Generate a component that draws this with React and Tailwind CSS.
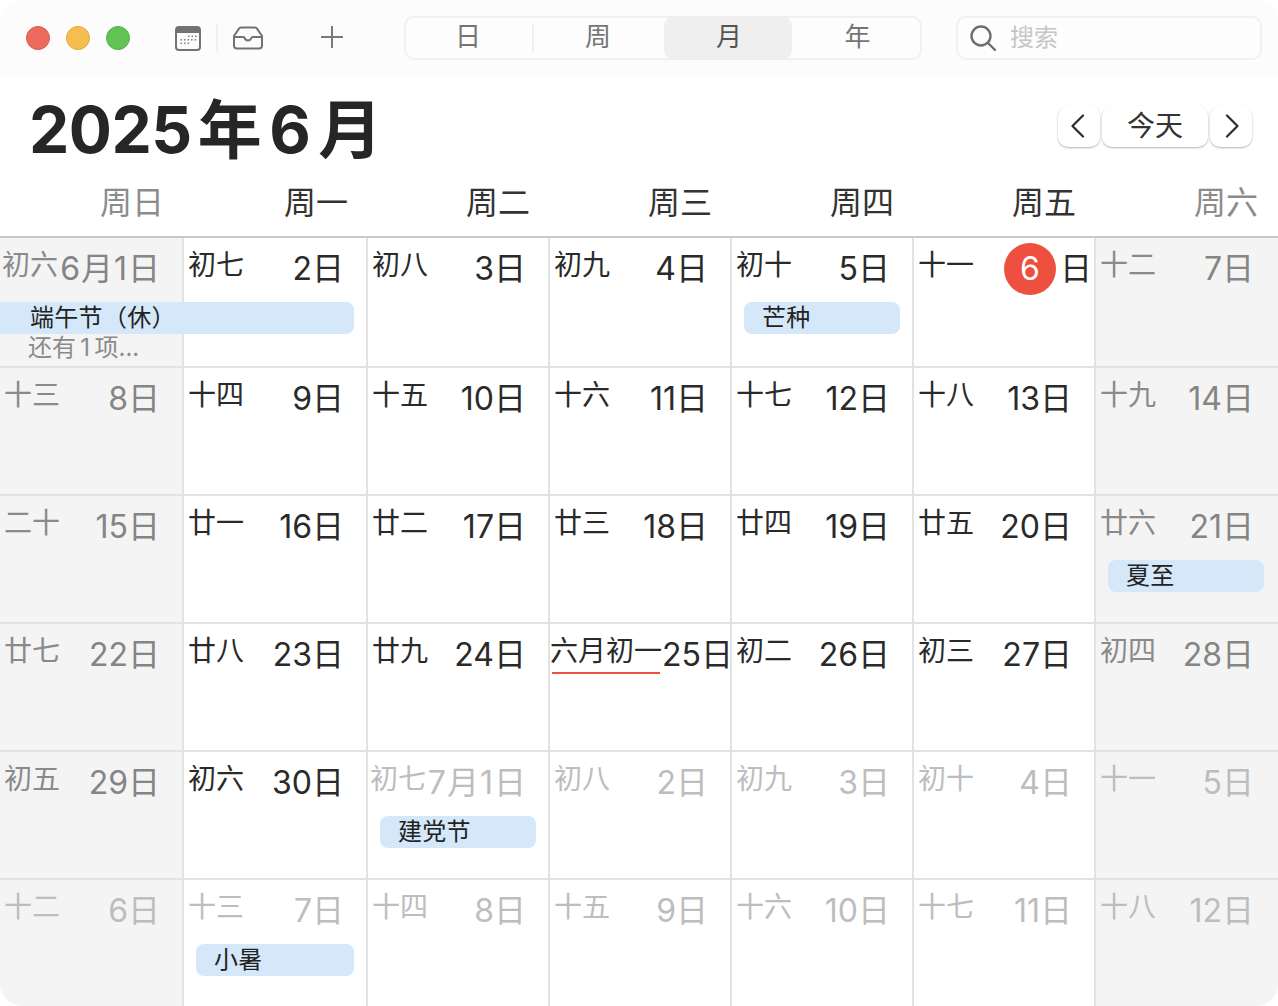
const FONT = "font-['Inter','Noto_Sans_CJK_SC',sans-serif]"

const COL_WIDTHS = "grid grid-cols-[184px_184px_182px_182px_182px_182px_182px]"

const weekDays = ["周日", "周一", "周二", "周三", "周四", "周五", "周六"]

// lunar, day label, muted (other month), optional event
const weeks = [
	[
		{ l: "初六", d: "6月1日", tight: true, span: "端午节（休）", more: "还有\u20091\u2009项..." },
		{ l: "初七", d: "2日" },
		{ l: "初八", d: "3日" },
		{ l: "初九", d: "4日" },
		{ l: "初十", d: "5日", ev: "芒种" },
		{ l: "十一", today: true },
		{ l: "十二", d: "7日" },
	],
	[
		{ l: "十三", d: "8日" },
		{ l: "十四", d: "9日" },
		{ l: "十五", d: "10日" },
		{ l: "十六", d: "11日" },
		{ l: "十七", d: "12日" },
		{ l: "十八", d: "13日" },
		{ l: "十九", d: "14日" },
	],
	[
		{ l: "二十", d: "15日" },
		{ l: "廿一", d: "16日" },
		{ l: "廿二", d: "17日" },
		{ l: "廿三", d: "18日" },
		{ l: "廿四", d: "19日" },
		{ l: "廿五", d: "20日" },
		{ l: "廿六", d: "21日", ev: "夏至" },
	],
	[
		{ l: "廿七", d: "22日" },
		{ l: "廿八", d: "23日" },
		{ l: "廿九", d: "24日" },
		{ l: "六月初一", d: "25日", newMonth: true },
		{ l: "初二", d: "26日" },
		{ l: "初三", d: "27日" },
		{ l: "初四", d: "28日" },
	],
	[
		{ l: "初五", d: "29日" },
		{ l: "初六", d: "30日" },
		{ l: "初七", d: "7月1日", tight: true, muted: true, ev: "建党节" },
		{ l: "初八", d: "2日", muted: true },
		{ l: "初九", d: "3日", muted: true },
		{ l: "初十", d: "4日", muted: true },
		{ l: "十一", d: "5日", muted: true },
	],
	[
		{ l: "十二", d: "6日", muted: true },
		{ l: "十三", d: "7日", muted: true, ev: "小暑" },
		{ l: "十四", d: "8日", muted: true },
		{ l: "十五", d: "9日", muted: true },
		{ l: "十六", d: "10日", muted: true },
		{ l: "十七", d: "11日", muted: true },
		{ l: "十八", d: "12日", muted: true },
	],
]

const CalendarIcon = () => (
	<svg width="26" height="25" viewBox="0 0 26 25">
		<rect x="1" y="1" width="24" height="23" rx="3" fill="none" stroke="#727272" strokeWidth="2" />
		<path d="M1 7V4a3 3 0 0 1 3-3h18a3 3 0 0 1 3 3v3z" fill="#727272" />
		<g fill="#8a8a8a">
			{[13, 16.5, 20].map((x) => <rect key={x} x={x} y="9.5" width="1.6" height="1.6" />)}
			{[5.5, 9, 12.5, 16, 19.5].map((x) => <rect key={x} x={x} y="13" width="1.6" height="1.6" />)}
			{[5.5, 9, 12.5].map((x) => <rect key={x} x={x} y="16.5" width="1.6" height="1.6" />)}
		</g>
	</svg>
)

const InboxIcon = () => (
	<svg width="32" height="24" viewBox="0 0 32 24" fill="none" stroke="#727272" strokeWidth="2" strokeLinejoin="round">
		<path d="M9 1.5h14a2.5 2.5 0 0 1 2 1.1l5 7.4v9.5a3 3 0 0 1-3 3H5a3 3 0 0 1-3-3V10l5-7.4a2.5 2.5 0 0 1 2-1.1z" />
		<path d="M2 11h9.5c0.8 0 1 0.6 1.3 1.4 0.5 1.3 1.7 2.1 3.2 2.1s2.7-0.8 3.2-2.1c0.3-0.8 0.5-1.4 1.3-1.4H30" />
	</svg>
)

const SearchIcon = () => (
	<svg width="28" height="28" viewBox="0 0 28 28" fill="none" stroke="#6e6e6e" strokeWidth="2.4" strokeLinecap="round">
		<circle cx="12" cy="12" r="9.5" />
		<path d="M19 19l7 7" />
	</svg>
)

const Chevron = ({ right }) => (
	<svg width="14" height="24" viewBox="0 0 14 24" fill="none" stroke="#2c2c2c" strokeWidth="2.2" strokeLinecap="round" strokeLinejoin="round">
		<path d={right ? "M2 1.5L12.5 12 2 22.5" : "M12 1.5L1.5 12 12 22.5"} />
	</svg>
)

const Toolbar = () => (
	<div className="h-[76px] bg-[#fcfcfc] flex items-center">
		<div className="flex gap-[16px] ml-[26px]">
			<div className="w-[24px] h-[24px] rounded-full bg-[#ee6a5f] border border-[#e0564b]"></div>
			<div className="w-[24px] h-[24px] rounded-full bg-[#f6bd4f] border border-[#e3a83b]"></div>
			<div className="w-[24px] h-[24px] rounded-full bg-[#61c454] border border-[#55b049]"></div>
		</div>
		<div className="ml-[45px] flex items-center">
			<CalendarIcon />
		</div>
		<div className="ml-[15px] w-[2px] h-[28px] bg-[#f0f0f0]"></div>
		<div className="ml-[14px] flex items-center">
			<InboxIcon />
		</div>
		<div className="ml-[57px] w-[22px] h-[22px] relative -mt-[2px]">
			<div className="absolute left-0 right-0 top-[10px] h-[2px] bg-[#7a7a7a]"></div>
			<div className="absolute top-0 bottom-0 left-[10px] w-[2px] bg-[#7a7a7a]"></div>
		</div>
		<div className="ml-[61px] w-[518px] h-[44px] rounded-[10px] border-2 border-[#f1f1f1] bg-[#fdfdfd] flex items-center text-[26px] leading-[38px] text-[#757575] relative">
			<div className="w-[124px] text-center pb-[2px] mr-[2px]">日</div>
			<div className="w-[2px] h-[28px] bg-[#f0f0f0]"></div>
			<div className="w-[130px] text-center pr-[2px] pb-[2px]">周</div>
			<div className="w-[128px] h-[44px] -my-[2px] rounded-[10px] bg-[#efefef] flex items-center justify-center text-[#555] pb-[2px] pl-[2px]">月</div>
			<div className="w-[127px] text-center pl-[4px] pb-[2px]">年</div>
		</div>
		<div className="ml-[34px] w-[306px] h-[44px] rounded-[10px] border-2 border-[#f1f1f1] bg-[#fdfdfd] flex items-center pl-[11px]">
			<SearchIcon />
			<span className="ml-[13px] text-[24px] text-[#c6c6c6]">搜索</span>
		</div>
	</div>
)

const TitleRow = () => (
	<div className="h-[102px] flex items-center justify-between pl-[29px] pr-[26px]">
		<h1 className="flex gap-[8px] items-center text-[64px] font-bold text-[#262626] leading-none tracking-[-0.5px] mt-[6px]">
			<span>2025</span>
			<span className="-ml-[2px]">年</span>
			<span>6</span>
			<span>月</span>
		</h1>
		<div className="flex gap-[2px] -mt-[2px]">
			<button className="w-[42px] h-[41px] rounded-[10px] bg-white shadow-[0_1px_2px_rgba(0,0,0,0.3)] flex items-center justify-center pr-[2px]">
				<Chevron />
			</button>
			<button className="w-[106px] h-[41px] rounded-[10px] bg-white shadow-[0_1px_2px_rgba(0,0,0,0.3)] text-[28px] leading-[38px] text-[#333]">今天</button>
			<button className="w-[42px] h-[41px] rounded-[10px] bg-white shadow-[0_1px_2px_rgba(0,0,0,0.3)] flex items-center justify-center pl-[2px]">
				<Chevron right />
			</button>
		</div>
	</div>
)

const WeekHeader = () => (
	<div className={`${COL_WIDTHS} h-[60px] border-b-2 border-[#c9c7cc]`}>
		{weekDays.map((w, i) => {
			const weekend = i === 0 || i === 6
			return (
				<div key={w} className={`text-right pr-[20px] text-[32px] leading-[50px] ${weekend ? "text-[#8c8c8c]" : "text-[#333]"}`}>
					{w}
				</div>
			)
		})}
	</div>
)

const Cell = ({ c, col, last }) => {
	const weekend = col === 0 || col === 6
	let lunarColor = "text-[#2a2a2a]"
	let dayColor = "text-[#2a2a2a]"
	if (weekend) {
		lunarColor = "text-[#8a8a8a]"
		dayColor = "text-[#858585]"
	}
	if (c.muted) {
		lunarColor = "text-[#bdbdbd]"
		dayColor = "text-[#bdbdbd]"
	}
	let padding = col === 6 ? "pl-[4px] pr-[24px]" : "pl-[4px] pr-[22px]"
	if (c.newMonth) padding = "pl-0 pr-[1px]"
	if (c.tight) padding = "pl-[2px] pr-[21px]"
	if (c.today) padding = "pl-[4px] pr-[2px]"

	return (
		<div className={`relative ${col < 6 ? "border-r-2" : ""} ${last ? "" : "border-b-2"} border-[#e2e2e2] ${weekend ? "bg-[#f4f4f4]" : "bg-white"}`}>
			<div className={`flex justify-between h-[64px] ${padding}`}>
				<div className={`relative text-[28px] leading-[40px] mt-[7px] h-[40px] whitespace-nowrap ${lunarColor}`}>
					{c.l}
					{c.newMonth && <div className="absolute left-[2px] right-[2px] top-[41px] h-[2px] bg-[#ee5040]"></div>}
				</div>
				{c.today ? (
					<div className="flex items-center h-[52px] mt-[5px] text-[32px] text-[#2a2a2a]">
						<span className="w-[52px] h-[52px] rounded-full bg-[#ee5040] text-white flex items-center justify-center">6</span>
						<span className="ml-[4px]">日</span>
					</div>
				) : (
					<div className={`text-[32px] leading-[40px] mt-[11px] h-[40px] whitespace-nowrap ${c.tight ? "tracking-[1px]" : ""} ${dayColor}`}>{c.d}</div>
				)}
			</div>
			{c.span && (
				<div className="relative z-10 w-[354px] h-[32px] rounded-r-[8px] bg-[#d4e8fa] pl-[30px] text-[24px] leading-[32px] tracking-[0.3px] text-[#222]">{c.span}</div>
			)}
			{c.more && <div className="pl-[28px] text-[24px] leading-[28px] text-[#8a8a8a]">{c.more}</div>}
			{c.ev && (
				<div className={`ml-[12px] h-[32px] rounded-[8px] bg-[#d4e8fa] pl-[18px] text-[24px] leading-[32px] tracking-[0.3px] text-[#222] ${col === 1 ? "w-[158px]" : "w-[156px]"}`}>{c.ev}</div>
			)}
		</div>
	)
}

const App = () => {
	return (
		<div className={`w-full h-[1006px] overflow-hidden bg-white rounded-[22px] flex flex-col ${FONT}`}>
			<Toolbar />
			<TitleRow />
			<WeekHeader />
			<div className={`${COL_WIDTHS} grid-rows-[130px_128px_128px_128px_128px_126px]`}>
				{weeks.map((week, r) =>
					week.map((c, i) => <Cell key={`${r}-${i}`} c={c} col={i} last={r === weeks.length - 1} />)
				)}
			</div>
		</div>
	)
}

export default App
